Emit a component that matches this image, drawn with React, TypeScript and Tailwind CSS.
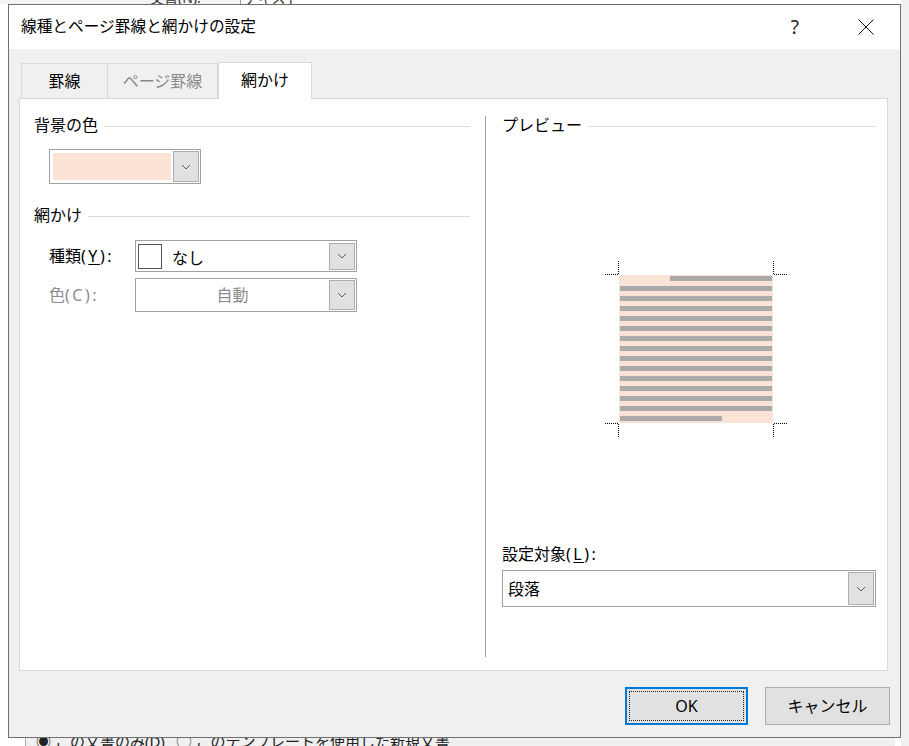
import React from "react";

const FONT = { fontFamily: '"Noto Sans", "Noto Sans CJK JP", sans-serif' };

function Chevron() {
  return (
    <svg width="10" height="6" viewBox="0 0 10 6">
      <polyline points="1,1 5,5 9,1" fill="none" stroke="#5a5a5a" strokeWidth="1" />
    </svg>
  );
}

function DropBtn({ h }: { h: string }) {
  return (
    <div className={`w-[26px] ${h} bg-[#e1e1e1] border border-[#adadad] flex items-center justify-center`}>
      <Chevron />
    </div>
  );
}

function GroupHeader({ label, className }: { label: string; className?: string }) {
  return (
    <div className={`flex items-center h-[20px] ${className ?? ""}`}>
      <span className="text-[16px] leading-none text-black whitespace-nowrap -mt-[2px]">{label}</span>
      <div className="flex-1 h-px bg-[#dcdcdc] ml-[6px]" />
    </div>
  );
}

function Preview() {
  const lines = Array.from({ length: 15 }, (_, i) => i);
  return (
    <svg width="192" height="186" viewBox="0 0 192 186" className="ml-[98px] mt-[119px] block">
      <rect x="19" y="20" width="154" height="148" fill="#fbe3d6" />
      {lines.map((i) => {
        const x = i === 0 ? 70 : 20;
        const w = i === 0 ? 102 : i === 14 ? 102 : 152;
        return <rect key={i} x={x} y={21 + i * 10} width={w} height={5} fill="#aaaaaa" />;
      })}
      <g stroke="#000" strokeWidth="1" strokeDasharray="1 1" fill="none">
        <line x1="18.5" y1="6" x2="18.5" y2="19" />
        <line x1="5" y1="19.5" x2="19" y2="19.5" />
        <line x1="173.5" y1="6" x2="173.5" y2="19" />
        <line x1="174" y1="19.5" x2="188" y2="19.5" />
        <line x1="5" y1="168.5" x2="19" y2="168.5" />
        <line x1="18.5" y1="169" x2="18.5" y2="183" />
        <line x1="174" y1="168.5" x2="188" y2="168.5" />
        <line x1="173.5" y1="169" x2="173.5" y2="183" />
      </g>
    </svg>
  );
}

export default function App() {
  return (
    <div className="relative w-[909px] h-[746px] overflow-hidden bg-white text-black" style={FONT}>
      {/* background fragments of the underlying window */}
      <div className="absolute left-0 top-0 w-[240px] h-[4px] bg-[#f3f3f3]" />
      <div className="absolute left-[150px] top-[-9px] text-[14px] leading-none text-[#333]">文書(N):</div>
      <div className="absolute left-[240px] top-0 w-px h-[4px] bg-[#999]" />
      <div className="absolute left-[244px] top-[-9px] text-[14px] leading-none text-[#333]">テキスト</div>
      <div className="absolute right-0 top-0 w-[8px] h-[746px] bg-[#f0f0f0]" />
      <div className="absolute left-[25px] top-[738px] w-[870px] h-[8px] bg-[#f0f0f0] border-l border-[#aaaaaa]" />
      <div className="absolute left-[36px] top-[734px] text-[15px] leading-none text-[#222] whitespace-nowrap">
        ◉ この文書のみ(D)&nbsp;&nbsp;&nbsp;◯ このテンプレートを使用した新規文書
      </div>

      {/* dialog */}
      <div className="absolute left-[8px] top-[4px] w-[893px] h-[734px] border border-[#707070] bg-[#f0f0f0] flex flex-col">
        {/* title bar */}
        <div className="h-[44px] bg-white flex items-center pl-[12px] shrink-0">
          <span className="text-[15.7px] leading-none">線種とページ罫線と網かけの設定</span>
          <span className="ml-auto text-[19px] leading-none mr-[59px] text-[#222]">?</span>
          <svg width="16" height="16" viewBox="0 0 16 16" className="mr-[26px]">
            <line x1="0.5" y1="0.5" x2="15.5" y2="15.5" stroke="#111" strokeWidth="1" />
            <line x1="15.5" y1="0.5" x2="0.5" y2="15.5" stroke="#111" strokeWidth="1" />
          </svg>
        </div>

        {/* body */}
        <div className="pl-[10px] pr-[12px] pt-[12px] flex flex-col">
          {/* tabs */}
          <div className="flex items-end h-[37px] pl-[2px] relative z-10">
            <div className="w-[87px] h-[35px] border border-b-0 border-[#d9d9d9] flex items-center justify-center text-[16px] leading-none">
              罫線
            </div>
            <div className="w-[110px] h-[35px] border border-b-0 border-l-0 border-[#d9d9d9] flex items-center justify-center text-[16px] leading-none text-[#8a8a8a]">
              ページ罫線
            </div>
            <div className="w-[94px] h-[37px] -mb-px bg-white border border-b-0 border-[#d9d9d9] flex items-center justify-center text-[16px] leading-none pb-[2px]">
              網かけ
            </div>
          </div>

          {/* panel */}
          <div className="h-[573px] bg-white border border-[#d9d9d9] flex pl-[14px] pr-[11px]">
            {/* left column */}
            <div className="w-[436px] flex flex-col">
              <GroupHeader label="背景の色" className="mt-[17px]" />
              <div className="ml-[15px] mt-[13px] w-[152px] h-[35px] border border-[#a0a0a0] bg-white flex items-center pl-[3px] pr-[1px] gap-[2px]">
                <div className="w-[118px] h-[27px] bg-[#fbe3d6]" />
                <DropBtn h="h-[31px]" />
              </div>
              <GroupHeader label="網かけ" className="mt-[22px]" />
              <div className="ml-[15px] mt-[14px] flex items-center">
                <span className="w-[86px] text-[16px] leading-none">
                  種類<span className="tracking-[2.5px]">(<span className="underline underline-offset-2">Y</span>):</span>
                </span>
                <div className="w-[222px] h-[32px] border border-[#a0a0a0] bg-white flex items-center pl-[2px] pr-[1px]">
                  <div className="w-[24px] h-[25px] border border-[#555]" />
                  <span className="ml-[10px] text-[16px] leading-none mt-[3px]">なし</span>
                  <div className="ml-auto">
                    <DropBtn h="h-[27px]" />
                  </div>
                </div>
              </div>
              <div className="ml-[15px] mt-[6px] flex items-center">
                <span className="w-[86px] text-[16px] leading-none text-[#8c8c8c]">
                  色<span className="tracking-[2.5px]">(C):</span>
                </span>
                <div className="w-[222px] h-[34px] border border-[#a0a0a0] bg-white flex items-center pr-[1px]">
                  <span className="flex-1 text-center text-[16px] leading-none text-[#8c8c8c]">自動</span>
                  <DropBtn h="h-[30px]" />
                </div>
              </div>
            </div>

            {/* divider */}
            <div className="ml-[15px] mt-[17px] w-px h-[541px] bg-[#a0a0a0]" />

            {/* right column */}
            <div className="ml-[16px] flex-1 flex flex-col">
              <GroupHeader label="プレビュー" className="mt-[17px]" />
              <Preview />
              <div className="mt-[103px] h-[20px] flex items-center text-[16px] leading-none">
                設定対象<span className="tracking-[2.5px]">(<span className="underline underline-offset-2">L</span>):</span>
              </div>
              <div className="mt-[6px] h-[37px] border border-[#a0a0a0] bg-white flex items-center pl-[5px] pr-[1px]">
                <span className="text-[16px] leading-none">段落</span>
                <div className="ml-auto">
                  <DropBtn h="h-[33px]" />
                </div>
              </div>
            </div>
          </div>

          {/* buttons */}
          <div className="flex justify-end gap-[17px] mt-[16px] -mr-[2px]">
            <div className="w-[123px] h-[38px] bg-[#e1e1e1] border-2 border-[#0078d7] p-[2px]">
              <div className="w-full h-full border border-dotted border-[#222] flex items-center justify-center text-[16px] leading-none">
                OK
              </div>
            </div>
            <div className="w-[125px] h-[38px] bg-[#e1e1e1] border border-[#adadad] flex items-center justify-center text-[16px] leading-none">
              キャンセル
            </div>
          </div>
        </div>
      </div>
    </div>
  );
}
